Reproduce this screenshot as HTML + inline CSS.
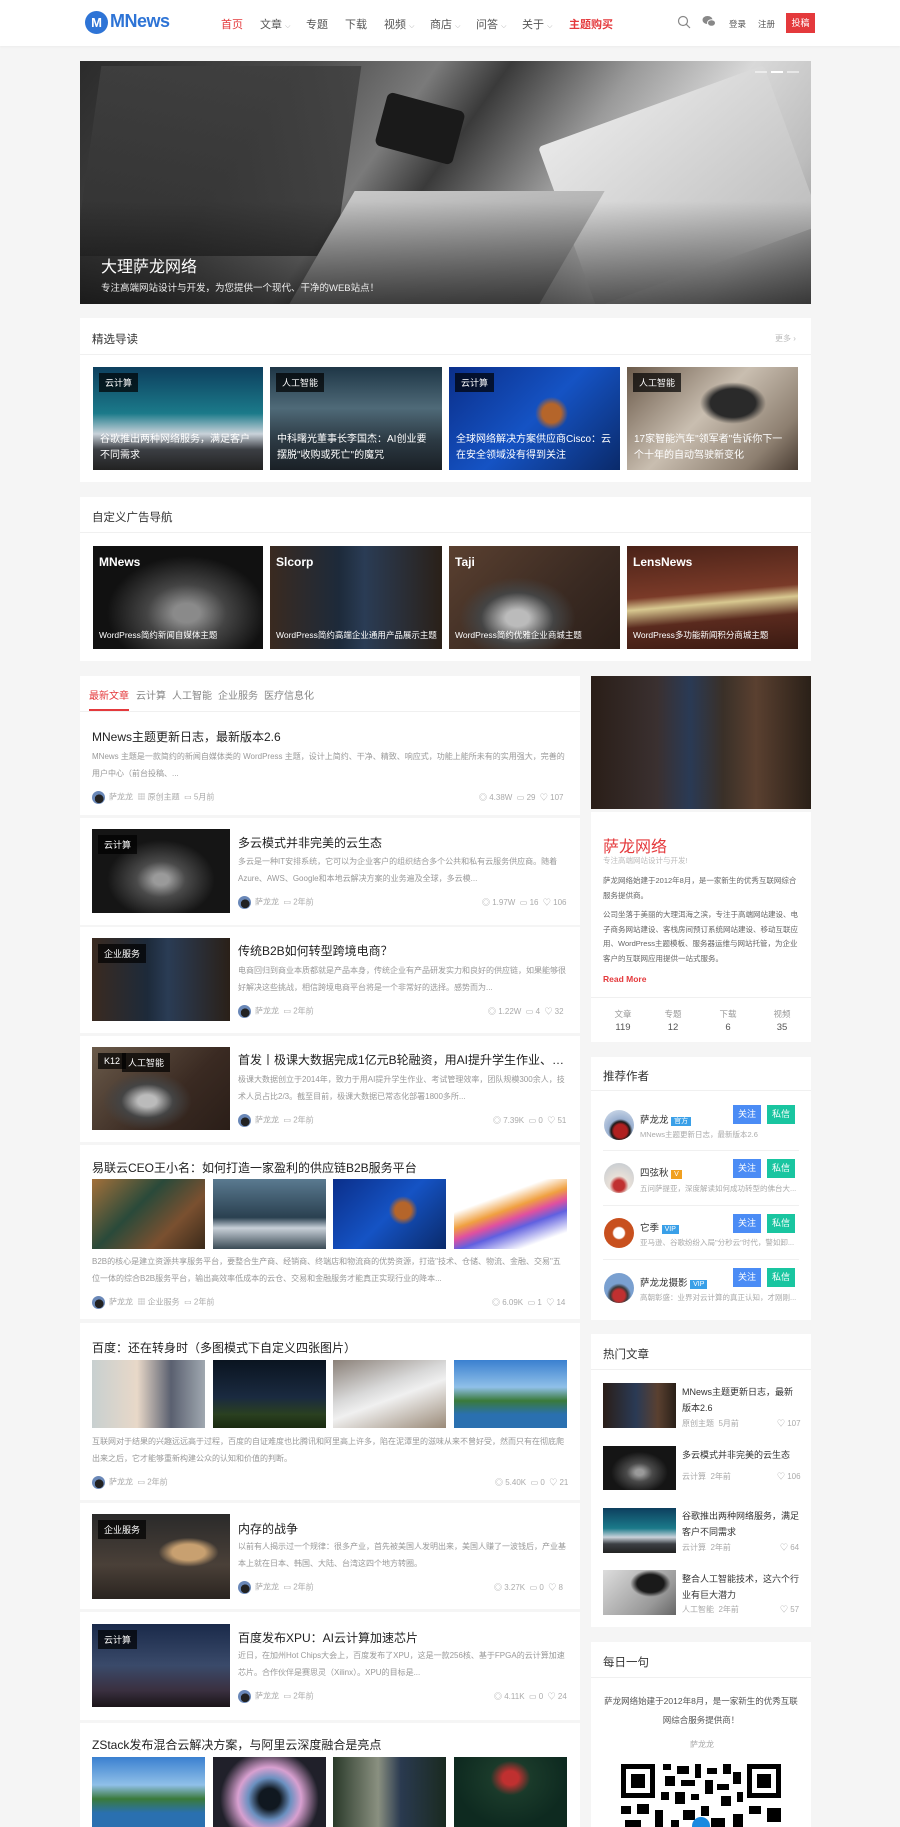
<!DOCTYPE html>
<html><head><meta charset="utf-8">
<style>
*{margin:0;padding:0;box-sizing:border-box}
body{width:900px;height:1827px;overflow:hidden;background:#f5f5f5;font-family:"Liberation Sans","Noto Sans CJK SC",sans-serif;color:#333;position:relative}
.a{position:absolute}
.w{position:absolute;background:#fff}
.t{position:absolute;white-space:nowrap}
.nav{font-size:11px;color:#555;top:16px}
.img{position:absolute;overflow:hidden}
.lab{position:absolute;left:6px;top:6px;background:rgba(0,0,0,.7);color:#fff;font-size:9px;padding:3px 6px}
.cap{position:absolute;left:7px;right:6px;bottom:6px;color:#fff;font-size:10px;line-height:16px}
.ttl{font-size:11.5px;color:#333}
.hr{position:absolute;height:1px;background:#f0f0f0}
.ex{font-size:8px;color:#999;line-height:17px;position:absolute;overflow:hidden;max-height:34px}
.meta{font-size:8px;color:#aaa;position:absolute;white-space:nowrap}
.av{display:inline-block;width:13px;height:13px;border-radius:50%;background:radial-gradient(circle at 55% 60%,#222 40%,#6a88b8 42%);vertical-align:middle;margin-right:4px}
.pt{font-size:12px;color:#222;position:absolute;white-space:nowrap;overflow:hidden;text-overflow:ellipsis}
.btn{position:absolute;width:28px;height:19px;color:#fff;font-size:9px;text-align:center;line-height:19px}
</style></head><body>
<div class="w" style="left:0;top:0;width:900px;height:46px;box-shadow:0 1px 2px rgba(0,0,0,.04)"></div>
<div class="a" style="left:85px;top:11px;width:23px;height:23px;border-radius:50%;background:#2e74d6;color:#fff;font-weight:bold;font-size:13px;text-align:center;line-height:23px">M</div>
<div class="t" style="left:110px;top:11px;font-size:18px;color:#2e74d6;font-weight:bold;letter-spacing:-.5px">MNews</div>
<div class="t nav" style="left:221px;color:#e4393c">首页</div>
<div class="t nav" style="left:260px">文章 <span style="font-size:7px;color:#aaa">⌵</span></div>
<div class="t nav" style="left:306px">专题</div>
<div class="t nav" style="left:345px">下载</div>
<div class="t nav" style="left:384px">视频 <span style="font-size:7px;color:#aaa">⌵</span></div>
<div class="t nav" style="left:430px">商店 <span style="font-size:7px;color:#aaa">⌵</span></div>
<div class="t nav" style="left:476px">问答 <span style="font-size:7px;color:#aaa">⌵</span></div>
<div class="t nav" style="left:522px">关于 <span style="font-size:7px;color:#aaa">⌵</span></div>
<div class="t nav" style="left:569px;color:#e4393c;font-weight:bold">主题购买</div>
<svg class="a" style="left:677px;top:15px" width="14" height="14" viewBox="0 0 14 14"><circle cx="6" cy="6" r="4.5" fill="none" stroke="#888" stroke-width="1.2"/><path d="M9.3 9.3L13 13" stroke="#888" stroke-width="1.2"/></svg>
<svg class="a" style="left:702px;top:15px" width="14" height="13" viewBox="0 0 14 13"><ellipse cx="5.5" cy="5" rx="5" ry="4" fill="#888"/><ellipse cx="9.5" cy="8" rx="4" ry="3.3" fill="#888" stroke="#fff" stroke-width="1"/></svg>
<div class="t" style="left:729px;top:18px;font-size:8.5px;color:#555">登录</div>
<div class="t" style="left:758px;top:18px;font-size:8.5px;color:#555">注册</div>
<div class="a" style="left:786px;top:13px;width:29px;height:20px;background:#e4393c;color:#fff;font-size:9px;text-align:center;line-height:20px">投稿</div>

<div class="img" style="left:80px;top:61px;width:731px;height:243px;background:linear-gradient(125deg,#2b2b2b 0%,#4a4a4a 25%,#7a7a7a 40%,#3a3a3a 48%,#9a9a9a 62%,#d9d9d9 75%,#bdbdbd 88%,#8a8a8a 100%)">
<div class="a" style="left:8px;top:5px;width:260px;height:190px;background:linear-gradient(160deg,#444,#222);transform:skewX(-8deg);opacity:.7"></div>
<div class="a" style="left:300px;top:40px;width:80px;height:55px;background:#1a1a1a;border-radius:6px;transform:rotate(15deg)"></div>
<div class="a" style="left:480px;top:40px;width:240px;height:170px;background:linear-gradient(160deg,#e8e8e8,#bcbcbc);transform:rotate(-20deg);border-radius:4px"></div>
<div class="a" style="left:240px;top:130px;width:250px;height:120px;background:linear-gradient(170deg,#c8c8c8,#8a8a8a);transform:skewX(-30deg)"></div>
<div class="a" style="left:0;top:140px;width:731px;height:103px;background:linear-gradient(180deg,rgba(0,0,0,0),rgba(0,0,0,.6))"></div>
<div class="t" style="left:21px;top:192px;font-size:16px;color:#fff">大理萨龙网络</div>
<div class="t" style="left:21px;top:219px;font-size:9.5px;color:#eee">专注高端网站设计与开发，为您提供一个现代、干净的WEB站点！</div>
<div class="a" style="left:675px;top:10px;width:12px;height:2px;background:rgba(255,255,255,.5)"></div>
<div class="a" style="left:691px;top:10px;width:12px;height:2px;background:#fff"></div>
<div class="a" style="left:707px;top:10px;width:12px;height:2px;background:rgba(255,255,255,.5)"></div>
</div>

<div class="w" style="left:80px;top:318px;width:731px;height:164px"></div>
<div class="t ttl" style="left:92px;top:331px">精选导读</div>
<div class="t" style="left:775px;top:333px;font-size:8px;color:#bbb">更多 ›</div>
<div class="hr" style="left:80px;top:354px;width:731px"></div>
<div class="img" style="left:93px;top:367px;width:170px;height:103px;background:linear-gradient(180deg,#0d3f5e,#1b7a8a 45%,#c9d2da 65%,#3c3f44 80%,#222)"><div class="lab">云计算</div><div class="cap">谷歌推出两种网络服务，满足客户不同需求</div></div>
<div class="img" style="left:270px;top:367px;width:172px;height:103px;background:linear-gradient(180deg,#1e3646,#4f6a78 40%,#2d3b45 70%,#1a2026)"><div class="lab">人工智能</div><div class="cap">中科曙光董事长李国杰：AI创业要摆脱"收购或死亡"的魔咒</div></div>
<div class="img" style="left:449px;top:367px;width:171px;height:103px;background:radial-gradient(circle at 60% 45%,#b5652a 8%,transparent 14%),linear-gradient(135deg,#0b2f8a,#1553c4 50%,#0a2a6a)"><div class="lab">云计算</div><div class="cap">全球网络解决方案供应商Cisco：云在安全领域没有得到关注</div></div>
<div class="img" style="left:627px;top:367px;width:171px;height:103px;background:radial-gradient(ellipse at 62% 35%,#2a2a2a 15%,transparent 22%),linear-gradient(135deg,#6b5a4a,#c9beb0 45%,#8d7f70 80%,#4a3d33)"><div class="lab">人工智能</div><div class="cap">17家智能汽车"领军者"告诉你下一个十年的自动驾驶新变化</div></div>

<div class="w" style="left:80px;top:497px;width:731px;height:164px"></div>
<div class="t ttl" style="left:92px;top:509px">自定义广告导航</div>
<div class="hr" style="left:80px;top:532px;width:731px"></div>
<div class="img" style="left:93px;top:546px;width:170px;height:103px;background:radial-gradient(ellipse at 55% 65%,#8a8a8a 10%,#444 30%,#111 60%)"><div class="t" style="left:6px;top:9px;color:#fff;font-weight:bold;font-size:12px">MNews</div><div class="t" style="left:6px;bottom:8px;color:#fff;font-size:8.5px">WordPress简约新闻自媒体主题</div></div>
<div class="img" style="left:270px;top:546px;width:172px;height:103px;background:linear-gradient(90deg,#3a2a20,#1d2a3a 40%,#2a3c55 55%,#2a2018)"><div class="t" style="left:6px;top:9px;color:#fff;font-weight:bold;font-size:12px">Slcorp</div><div class="t" style="left:6px;bottom:8px;color:#fff;font-size:8.5px">WordPress简约高端企业通用产品展示主题</div></div>
<div class="img" style="left:449px;top:546px;width:171px;height:103px;background:radial-gradient(ellipse at 40% 70%,#bbb 8%,#444 25%,transparent 40%),linear-gradient(135deg,#5a4030,#3a2a22 60%,#2a1e18)"><div class="t" style="left:6px;top:9px;color:#fff;font-weight:bold;font-size:12px">Taji</div><div class="t" style="left:6px;bottom:8px;color:#fff;font-size:8.5px">WordPress简约优雅企业商城主题</div></div>
<div class="img" style="left:627px;top:546px;width:171px;height:103px;background:linear-gradient(175deg,#4a2218,#7a3a28 45%,#d8c890 55%,#5a2a1e 70%,#3a1a12)"><div class="t" style="left:6px;top:9px;color:#fff;font-weight:bold;font-size:12px">LensNews</div><div class="t" style="left:6px;bottom:8px;color:#fff;font-size:8.5px">WordPress多功能新闻积分商城主题</div></div>

<div class="w" style="left:80px;top:676px;width:500px;height:139px"></div>
<div class="t" style="left:89px;top:687px;font-size:10px;color:#e4393c">最新文章</div>
<div class="t" style="left:136px;top:687px;font-size:10px;color:#888">云计算</div>
<div class="t" style="left:172px;top:687px;font-size:10px;color:#888">人工智能</div>
<div class="t" style="left:218px;top:687px;font-size:10px;color:#888">企业服务</div>
<div class="t" style="left:264px;top:687px;font-size:10px;color:#888">医疗信息化</div>
<div class="a" style="left:89px;top:709px;width:40px;height:2px;background:#e4393c"></div>
<div class="hr" style="left:80px;top:711px;width:500px"></div>
<div class="pt" style="left:92px;top:728px">MNews主题更新日志，最新版本2.6</div>
<div class="ex" style="left:92px;top:748px;width:476px">MNews 主题是一款简约的新闻自媒体类的 WordPress 主题，设计上简约、干净、精致、响应式，功能上能所未有的实用强大，完善的用户中心（前台投稿、...</div>
<div class="meta" style="left:92px;top:791px"><span class="av"></span>萨龙龙 &nbsp;▦ 原创主题 &nbsp;▭ 5月前</div>
<div class="meta" style="left:479px;top:792px">◎ 4.38W &nbsp;▭ 29 &nbsp;♡ 107</div>

<div class="w" style="left:80px;top:818px;width:500px;height:107px"></div>
<div class="img" style="left:92px;top:829px;width:138px;height:84px;background:radial-gradient(ellipse at 50% 60%,#9a9a9a 8%,#4a4a4a 25%,#151515 55%)"><div class="lab">云计算</div></div>
<div class="pt" style="left:238px;top:834px;width:330px">多云模式并非完美的云生态</div>
<div class="ex" style="left:238px;top:853px;width:330px">多云是一种IT安排系统，它可以为企业客户的组织结合多个公共和私有云服务供应商。随着Azure、AWS、Google和本地云解决方案的业务遍及全球，多云模...</div>
<div class="meta" style="left:238px;top:896px"><span class="av"></span>萨龙龙 &nbsp;▭ 2年前</div>
<div class="meta" style="left:482px;top:897px">◎ 1.97W &nbsp;▭ 16 &nbsp;♡ 106</div>

<div class="w" style="left:80px;top:927px;width:500px;height:106px"></div>
<div class="img" style="left:92px;top:938px;width:138px;height:83px;background:linear-gradient(90deg,#3a2a20,#1d2a3a 40%,#2a3c55 55%,#2a2018)"><div class="lab">企业服务</div></div>
<div class="pt" style="left:238px;top:942px;width:330px">传统B2B如何转型跨境电商？</div>
<div class="ex" style="left:238px;top:962px;width:330px">电商回归到商业本质都就是产品本身，传统企业有产品研发实力和良好的供应链，如果能够很好解决这些挑战，相信跨境电商平台将是一个非常好的选择。感势而为...</div>
<div class="meta" style="left:238px;top:1005px"><span class="av"></span>萨龙龙 &nbsp;▭ 2年前</div>
<div class="meta" style="left:488px;top:1006px">◎ 1.22W &nbsp;▭ 4 &nbsp;♡ 32</div>

<div class="w" style="left:80px;top:1036px;width:500px;height:106px"></div>
<div class="img" style="left:92px;top:1047px;width:138px;height:83px;background:radial-gradient(ellipse at 40% 65%,#bbb 8%,#444 22%,transparent 38%),linear-gradient(135deg,#6a5a4a,#3a2a22 60%,#2a1e18)"><div class="lab">K12</div><div class="lab" style="left:30px">人工智能</div></div>
<div class="pt" style="left:238px;top:1051px;width:330px">首发丨极课大数据完成1亿元B轮融资，用AI提升学生作业、考试...</div>
<div class="ex" style="left:238px;top:1071px;width:330px">极课大数据创立于2014年，致力于用AI提升学生作业、考试管理效率，团队规模300余人，技术人员占比2/3。截至目前，极课大数据已常态化部署1800多所...</div>
<div class="meta" style="left:238px;top:1114px"><span class="av"></span>萨龙龙 &nbsp;▭ 2年前</div>
<div class="meta" style="left:493px;top:1115px">◎ 7.39K &nbsp;▭ 0 &nbsp;♡ 51</div>

<div class="w" style="left:80px;top:1145px;width:500px;height:174px"></div>
<div class="pt" style="left:92px;top:1159px">易联云CEO王小名：如何打造一家盈利的供应链B2B服务平台</div>
<div class="img" style="left:92px;top:1179px;width:113px;height:70px;background:linear-gradient(135deg,#a3703a,#2a4a3a 40%,#7a5030 70%,#3a2a1a)"></div>
<div class="img" style="left:213px;top:1179px;width:113px;height:70px;background:linear-gradient(180deg,#5a7a90,#2a4050 55%,#c8d0d8 70%,#3a4a55)"></div>
<div class="img" style="left:333px;top:1179px;width:113px;height:70px;background:radial-gradient(circle at 62% 45%,#b5652a 10%,transparent 18%),linear-gradient(135deg,#0b2f8a,#1553c4 50%,#0a2a6a)"></div>
<div class="img" style="left:454px;top:1179px;width:113px;height:70px;background:linear-gradient(160deg,#fff 30%,#f0a040 45%,#e050a0 55%,#6060e0 65%,#fff 85%)"></div>
<div class="ex" style="left:92px;top:1253px;width:476px">B2B的核心是建立资源共享服务平台，要整合生产商、经销商、终端店和物流商的优势资源，打造"技术、仓储、物流、金融、交易"五位一体的综合B2B服务平台，输出高效率低成本的云仓、交易和金融服务才能真正实现行业的降本...</div>
<div class="meta" style="left:92px;top:1296px"><span class="av"></span>萨龙龙 &nbsp;▦ 企业服务 &nbsp;▭ 2年前</div>
<div class="meta" style="left:492px;top:1297px">◎ 6.09K &nbsp;▭ 1 &nbsp;♡ 14</div>

<div class="w" style="left:80px;top:1323px;width:500px;height:177px"></div>
<div class="pt" style="left:92px;top:1339px">百度：还在转身时（多图模式下自定义四张图片）</div>
<div class="img" style="left:92px;top:1360px;width:113px;height:68px;background:linear-gradient(90deg,#c8d0d0,#e8d8c8 40%,#5a6070 70%,#a0a8b0)"></div>
<div class="img" style="left:213px;top:1360px;width:113px;height:68px;background:linear-gradient(180deg,#0a1420,#1a2a40 55%,#2a4020 80%,#1a2a10)"></div>
<div class="img" style="left:333px;top:1360px;width:113px;height:68px;background:linear-gradient(160deg,#8a8078,#d8d8d8 40%,#f0f0f0 55%,#9a8a78)"></div>
<div class="img" style="left:454px;top:1360px;width:113px;height:68px;background:linear-gradient(180deg,#3a80d0,#90c0e8 40%,#3a7a3a 60%,#2a70b0 80%)"></div>
<div class="ex" style="left:92px;top:1433px;width:476px">互联网对于结果的兴趣远远高于过程，百度的自证难度也比腾讯和阿里高上许多，陷在泥潭里的滋味从来不曾好受，然而只有在彻底爬出来之后，它才能够重新构建公众的认知和价值的判断。</div>
<div class="meta" style="left:92px;top:1476px"><span class="av"></span>萨龙龙 &nbsp;▭ 2年前</div>
<div class="meta" style="left:495px;top:1477px">◎ 5.40K &nbsp;▭ 0 &nbsp;♡ 21</div>

<div class="w" style="left:80px;top:1503px;width:500px;height:106px"></div>
<div class="img" style="left:92px;top:1514px;width:138px;height:85px;background:radial-gradient(ellipse at 70% 45%,#c8a070 12%,transparent 22%),linear-gradient(180deg,#2a2a2a,#4a4038 60%,#2a2420)"><div class="lab">企业服务</div></div>
<div class="pt" style="left:238px;top:1520px">内存的战争</div>
<div class="ex" style="left:238px;top:1538px;width:330px">以前有人揭示过一个规律：很多产业，首先被美国人发明出来，美国人赚了一波钱后，产业基本上就在日本、韩国、大陆、台湾这四个地方转圈。</div>
<div class="meta" style="left:238px;top:1581px"><span class="av"></span>萨龙龙 &nbsp;▭ 2年前</div>
<div class="meta" style="left:494px;top:1582px">◎ 3.27K &nbsp;▭ 0 &nbsp;♡ 8</div>

<div class="w" style="left:80px;top:1612px;width:500px;height:108px"></div>
<div class="img" style="left:92px;top:1624px;width:138px;height:83px;background:linear-gradient(180deg,#1a2a4a,#3a4a6a 50%,#3a3040 80%,#1a1418)"><div class="lab">云计算</div></div>
<div class="pt" style="left:238px;top:1629px">百度发布XPU：AI云计算加速芯片</div>
<div class="ex" style="left:238px;top:1647px;width:330px">近日，在加州Hot Chips大会上，百度发布了XPU，这是一款256核、基于FPGA的云计算加速芯片。合作伙伴是赛思灵（Xilinx）。XPU的目标是...</div>
<div class="meta" style="left:238px;top:1690px"><span class="av"></span>萨龙龙 &nbsp;▭ 2年前</div>
<div class="meta" style="left:494px;top:1691px">◎ 4.11K &nbsp;▭ 0 &nbsp;♡ 24</div>

<div class="w" style="left:80px;top:1723px;width:500px;height:104px"></div>
<div class="pt" style="left:92px;top:1736px">ZStack发布混合云解决方案，与阿里云深度融合是亮点</div>
<div class="img" style="left:92px;top:1757px;width:113px;height:70px;background:linear-gradient(180deg,#3a80d0,#90c0e8 40%,#3a7a3a 60%,#2a70b0 80%)"></div>
<div class="img" style="left:213px;top:1757px;width:113px;height:70px;background:radial-gradient(circle at 50% 60%,#101820 15%,#6a90c0 30%,#d8a0d0 45%,#20202a 70%)"></div>
<div class="img" style="left:333px;top:1757px;width:113px;height:70px;background:linear-gradient(90deg,#2a3a2a,#8a9080 40%,#2a3a50 60%,#1a2a20)"></div>
<div class="img" style="left:454px;top:1757px;width:113px;height:70px;background:radial-gradient(ellipse at 50% 30%,#c03030 10%,#1a3a2a 25%,#0e2a20 70%)"></div>

<div class="img" style="left:591px;top:676px;width:220px;height:133px;background:linear-gradient(90deg,#2a1e18,#3a3030 30%,#2a3a55 45%,#3a3028 60%,#5a4030 75%,#2a2018)"></div>
<div class="w" style="left:591px;top:812px;width:220px;height:230px"></div>
<div class="t" style="left:603px;top:833px;font-size:16px;color:#e4393c">萨龙网络</div>
<div class="t" style="left:603px;top:855px;font-size:7.5px;color:#bbb">专注高端网站设计与开发!</div>
<div class="a" style="left:603px;top:874px;width:196px;font-size:7.5px;color:#666;line-height:14.5px">萨龙网络始建于2012年8月，是一家新生的优秀互联网综合服务提供商。</div>
<div class="a" style="left:603px;top:908px;width:196px;font-size:7.5px;color:#666;line-height:14.5px">公司坐落于美丽的大理洱海之滨，专注于高端网站建设、电子商务网站建设、客栈房间预订系统网站建设、移动互联应用、WordPress主题模板、服务器运维与网站托管，为企业客户的互联网应用提供一站式服务。</div>
<div class="t" style="left:603px;top:974px;font-size:8.5px;color:#e4393c;font-weight:bold">Read More</div>
<div class="hr" style="left:591px;top:997px;width:220px"></div>
<div class="t" style="left:609px;top:1008px;width:28px;text-align:center;font-size:8.5px;color:#999">文章</div>
<div class="t" style="left:609px;top:1022px;width:28px;text-align:center;font-size:9.5px;color:#555">119</div>
<div class="t" style="left:659px;top:1008px;width:28px;text-align:center;font-size:8.5px;color:#999">专题</div>
<div class="t" style="left:659px;top:1022px;width:28px;text-align:center;font-size:9.5px;color:#555">12</div>
<div class="t" style="left:714px;top:1008px;width:28px;text-align:center;font-size:8.5px;color:#999">下载</div>
<div class="t" style="left:714px;top:1022px;width:28px;text-align:center;font-size:9.5px;color:#555">6</div>
<div class="t" style="left:768px;top:1008px;width:28px;text-align:center;font-size:8.5px;color:#999">视频</div>
<div class="t" style="left:768px;top:1022px;width:28px;text-align:center;font-size:9.5px;color:#555">35</div>

<div class="w" style="left:591px;top:1057px;width:220px;height:263px"></div>
<div class="t ttl" style="left:603px;top:1068px">推荐作者</div>
<div class="hr" style="left:591px;top:1090px;width:220px"></div>
<div class="a" style="left:604px;top:1110px;width:30px;height:30px;border-radius:50%;background:radial-gradient(circle at 55% 70%,#b02020 25%,#1a1a1a 35%,#9ab0d0 45%,#dde6f0)"></div>
<div class="t" style="left:640px;top:1112px;font-size:9.5px;color:#333">萨龙龙 <span style="background:#3aa0e8;color:#fff;font-size:7px;padding:1px 3px">官方</span></div>
<div class="t" style="left:640px;top:1129px;font-size:7.5px;color:#aaa">MNews主题更新日志，最新版本2.6</div>
<div class="btn" style="left:733px;top:1105px;background:#4b8cf5">关注</div>
<div class="btn" style="left:767px;top:1105px;background:#19c5a0">私信</div>
<div class="hr" style="left:603px;top:1150px;width:196px"></div>

<div class="a" style="left:604px;top:1163px;width:30px;height:30px;border-radius:50%;background:radial-gradient(circle at 50% 75%,#c03030 20%,#e8e0d8 35%,#c0c8d0)"></div>
<div class="t" style="left:640px;top:1165px;font-size:9.5px;color:#333">四弦秋 <span style="background:#f0a020;color:#fff;font-size:7px;padding:1px 3px">V</span></div>
<div class="t" style="left:640px;top:1183px;font-size:7.5px;color:#aaa">五问萨提亚，深度解读如何成功转型的佛台大...</div>
<div class="btn" style="left:733px;top:1159px;background:#4b8cf5">关注</div>
<div class="btn" style="left:767px;top:1159px;background:#19c5a0">私信</div>
<div class="hr" style="left:603px;top:1205px;width:196px"></div>

<div class="a" style="left:604px;top:1218px;width:30px;height:30px;border-radius:50%;background:radial-gradient(circle,#fff 25%,#c8501e 32%)"></div>
<div class="t" style="left:640px;top:1220px;font-size:9.5px;color:#333">它季 <span style="background:#3aa0e8;color:#fff;font-size:7px;padding:1px 3px">VIP</span></div>
<div class="t" style="left:640px;top:1237px;font-size:7.5px;color:#aaa">亚马逊、谷歌纷纷入局"分秒云"时代，警如卸...</div>
<div class="btn" style="left:733px;top:1214px;background:#4b8cf5">关注</div>
<div class="btn" style="left:767px;top:1214px;background:#19c5a0">私信</div>
<div class="hr" style="left:603px;top:1259px;width:196px"></div>

<div class="a" style="left:604px;top:1273px;width:30px;height:30px;border-radius:50%;background:radial-gradient(circle at 50% 75%,#c03030 22%,#3a3a3a 32%,#7aa0d0 45%)"></div>
<div class="t" style="left:640px;top:1275px;font-size:9.5px;color:#333">萨龙龙摄影 <span style="background:#3aa0e8;color:#fff;font-size:7px;padding:1px 3px">VIP</span></div>
<div class="t" style="left:640px;top:1292px;font-size:7.5px;color:#aaa">高朝彰盛：业界对云计算的真正认知，才刚刚...</div>
<div class="btn" style="left:733px;top:1268px;background:#4b8cf5">关注</div>
<div class="btn" style="left:767px;top:1268px;background:#19c5a0">私信</div>

<div class="w" style="left:591px;top:1334px;width:220px;height:293px"></div>
<div class="t ttl" style="left:603px;top:1346px">热门文章</div>
<div class="hr" style="left:591px;top:1369px;width:220px"></div>
<div class="img" style="left:603px;top:1383px;width:73px;height:45px;background:linear-gradient(90deg,#2a1e18,#2a3a55 45%,#5a4030 75%,#2a2018)"></div>
<div class="t" style="left:682px;top:1384px;font-size:9px;color:#333;white-space:normal;width:117px;line-height:16px">MNews主题更新日志，最新版本2.6</div>
<div class="meta" style="left:682px;top:1418px">原创主题 &nbsp;5月前</div><div class="meta" style="left:777px;top:1418px">♡ 107</div>
<div class="img" style="left:603px;top:1446px;width:73px;height:44px;background:radial-gradient(ellipse at 50% 60%,#9a9a9a 8%,#4a4a4a 25%,#151515 55%)"></div>
<div class="t" style="left:682px;top:1448px;font-size:9px;color:#333">多云模式并非完美的云生态</div>
<div class="meta" style="left:682px;top:1471px">云计算 &nbsp;2年前</div><div class="meta" style="left:777px;top:1471px">♡ 106</div>
<div class="img" style="left:603px;top:1508px;width:73px;height:45px;background:linear-gradient(180deg,#0d3f5e,#1b7a8a 45%,#c9d2da 65%,#3c3f44 80%,#222)"></div>
<div class="t" style="left:682px;top:1508px;font-size:9px;color:#333;white-space:normal;width:117px;line-height:16px">谷歌推出两种网络服务，满足客户不同需求</div>
<div class="meta" style="left:682px;top:1542px">云计算 &nbsp;2年前</div><div class="meta" style="left:780px;top:1542px">♡ 64</div>
<div class="img" style="left:603px;top:1570px;width:73px;height:45px;background:radial-gradient(ellipse at 65% 30%,#1a1a1a 20%,transparent 30%),linear-gradient(135deg,#ddd,#999 70%,#666)"></div>
<div class="t" style="left:682px;top:1571px;font-size:9px;color:#333;white-space:normal;width:117px;line-height:16px">整合人工智能技术，这六个行业有巨大潜力</div>
<div class="meta" style="left:682px;top:1604px">人工智能 &nbsp;2年前</div><div class="meta" style="left:780px;top:1604px">♡ 57</div>

<div class="w" style="left:591px;top:1642px;width:220px;height:185px"></div>
<div class="t ttl" style="left:603px;top:1654px">每日一句</div>
<div class="hr" style="left:591px;top:1677px;width:220px"></div>
<div class="a" style="left:603px;top:1692px;width:196px;text-align:center;font-size:8.5px;color:#555;line-height:19px">萨龙网络始建于2012年8月，是一家新生的优秀互联网综合服务提供商！</div>
<div class="t" style="left:690px;top:1739px;font-size:8px;color:#aaa">萨龙龙</div>
<svg class="a" style="left:621px;top:1764px" width="160" height="63" viewBox="0 0 160 63">
<rect x="0" y="0" width="34" height="34" fill="#000"/><rect x="5" y="5" width="24" height="24" fill="#fff"/><rect x="10" y="10" width="14" height="14" fill="#000"/>
<rect x="126" y="0" width="34" height="34" fill="#000"/><rect x="131" y="5" width="24" height="24" fill="#fff"/><rect x="136" y="10" width="14" height="14" fill="#000"/>
<g fill="#000"><rect x="42" y="0" width="8" height="6"/><rect x="56" y="2" width="12" height="8"/><rect x="74" y="0" width="6" height="14"/><rect x="86" y="4" width="10" height="6"/><rect x="102" y="0" width="8" height="10"/><rect x="112" y="8" width="8" height="12"/><rect x="44" y="12" width="10" height="10"/><rect x="60" y="16" width="14" height="6"/><rect x="84" y="16" width="8" height="14"/><rect x="96" y="20" width="12" height="6"/><rect x="40" y="28" width="8" height="8"/><rect x="54" y="28" width="10" height="12"/><rect x="70" y="30" width="8" height="6"/><rect x="100" y="32" width="10" height="10"/><rect x="116" y="28" width="6" height="10"/><rect x="0" y="42" width="10" height="8"/><rect x="16" y="40" width="12" height="10"/><rect x="34" y="46" width="8" height="17"/><rect x="62" y="46" width="12" height="10"/><rect x="80" y="42" width="8" height="10"/><rect x="90" y="54" width="14" height="9"/><rect x="128" y="42" width="12" height="8"/><rect x="146" y="44" width="14" height="14"/><rect x="4" y="56" width="16" height="7"/><rect x="112" y="50" width="10" height="13"/><rect x="50" y="56" width="8" height="7"/></g>
<circle cx="80" cy="62" r="9" fill="#1a8ae0"/>
</svg>
</body></html>
